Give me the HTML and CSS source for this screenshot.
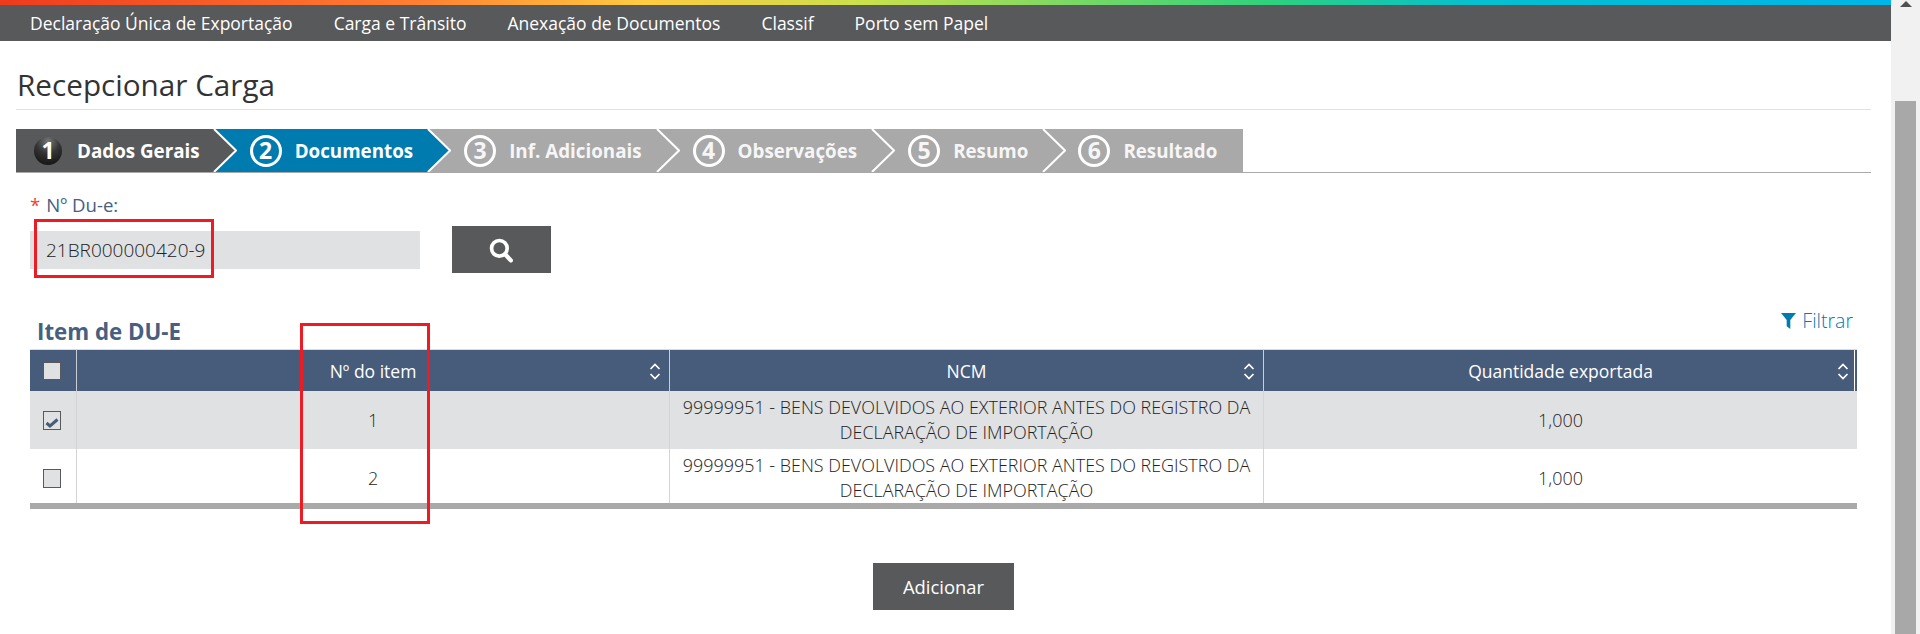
FILE: index.html
```html
<!DOCTYPE html>
<html lang="pt-BR">
<head>
<meta charset="utf-8">
<title>Recepcionar Carga</title>
<link rel="stylesheet" href="styles.css">
</head>
<body>
<div class="app">
  <div class="page">
    <div class="rainbow"></div>
    <nav class="nav">
      <a>Declaração Única de Exportação</a>
      <a>Carga e Trânsito</a>
      <a>Anexação de Documentos</a>
      <a>Classif</a>
      <a>Porto sem Papel</a>
    </nav>
    <main class="content">
      <h1 class="title">Recepcionar Carga</h1>
      <ol class="steps">
        <li class="step done"><span class="num">1</span><span>Dados Gerais</span>
          <svg class="chev" viewBox="0 0 24 43"><path class="tip" d="M0 0L23 21.5L0 43Z"/><path class="line" d="M1 0L23 21.5L1 43"/></svg></li>
        <li class="step active"><span class="num">2</span><span>Documentos</span>
          <svg class="chev" viewBox="0 0 24 43"><path class="tip" d="M0 0L23 21.5L0 43Z"/><path class="line" d="M1 0L23 21.5L1 43"/></svg></li>
        <li class="step"><span class="num">3</span><span>Inf. Adicionais</span>
          <svg class="chev" viewBox="0 0 24 43"><path class="tip" d="M0 0L23 21.5L0 43Z"/><path class="line" d="M1 0L23 21.5L1 43"/></svg></li>
        <li class="step"><span class="num">4</span><span>Observações</span>
          <svg class="chev" viewBox="0 0 24 43"><path class="tip" d="M0 0L23 21.5L0 43Z"/><path class="line" d="M1 0L23 21.5L1 43"/></svg></li>
        <li class="step"><span class="num">5</span><span>Resumo</span>
          <svg class="chev" viewBox="0 0 24 43"><path class="tip" d="M0 0L23 21.5L0 43Z"/><path class="line" d="M1 0L23 21.5L1 43"/></svg></li>
        <li class="step step-end"><span class="num">6</span><span>Resultado</span></li>
      </ol>
      <section class="form">
        <label class="field-label"><span class="req">*</span><span class="label-text">Nº Du-e:</span></label>
        <div class="field-row">
          <div class="input">21BR000000420-9</div>
          <button class="btn btn-search" type="button" aria-label="Pesquisar">
            <svg class="search-icon" viewBox="0 0 22 23"><circle cx="9.5" cy="9.5" r="7.2"/><path d="M14.8 15L20 20.6"/></svg>
          </button>
        </div>
        <div class="table-head">
          <h2 class="subtitle">Item de DU-E</h2>
          <a class="filter"><svg class="filter-icon" viewBox="0 0 14 15"><path d="M0 0H14L8.7 6.6V15L5.3 12.4V6.6Z"/></svg>Filtrar</a>
        </div>
        <table class="grid">
          <colgroup><col class="c-check"><col class="c-a"><col class="c-b"><col class="c-c"></colgroup>
          <thead>
            <tr>
              <th><span class="box"></span></th>
              <th>Nº do item<svg class="sort" viewBox="0 0 12 17"><path d="M1.5 6L6 1.5L10.500 6M1.500 11L6 15.500L10.500 11"/></svg></th>
              <th>NCM<svg class="sort" viewBox="0 0 12 17"><path d="M1.5 6L6 1.5L10.500 6M1.500 11L6 15.500L10.500 11"/></svg></th>
              <th>Quantidade exportada<svg class="sort" viewBox="0 0 12 17"><path d="M1.5 6L6 1.5L10.500 6M1.500 11L6 15.500L10.500 11"/></svg></th>
            </tr>
          </thead>
          <tbody>
            <tr class="sel">
              <td><span class="box box-dark"><svg class="check" viewBox="0 0 14 10"><path d="M1.500 5L5 8L12.500 1.500"/></svg></span></td>
              <td>1</td>
              <td>99999951 - BENS DEVOLVIDOS AO EXTERIOR ANTES DO REGISTRO DA DECLARAÇÃO DE IMPORTAÇÃO</td>
              <td>1,000</td>
            </tr>
            <tr class="last">
              <td><span class="box box-dark"></span></td>
              <td>2</td>
              <td>99999951 - BENS DEVOLVIDOS AO EXTERIOR ANTES DO REGISTRO DA DECLARAÇÃO DE IMPORTAÇÃO</td>
              <td>1,000</td>
            </tr>
          </tbody>
        </table>
        <div class="actions"><button class="btn btn-add" type="button">Adicionar</button></div>
      </section>
    </main>
    <div class="mark mark-input"></div>
    <div class="mark mark-col"></div>
  </div>
  <aside class="scrollbar">
    <span class="arrow"></span>
    <span class="thumb"></span>
  </aside>
</div>
</body>
</html>
```
FILE: styles.css
```css
* { box-sizing: border-box; }
html, body { margin: 0; height: 634px; overflow: hidden; background: #fff; }
body { font-family: "Open Sans", "Liberation Sans", sans-serif; color: #333; }

.app { display: flex; height: 634px; }
.page { position: relative; flex: 1; min-width: 0; }

.rainbow {
  height: 5px;
  background: linear-gradient(90deg, #ef3a1d 0%, #ff7f32 22%, #ffcb42 34%, #c8e04c 46%, #2fd17c 67%, #06bfcf 78%, #00b5e8 100%);
}
.nav {
  height: 36px;
  background: #58595b;
  display: flex;
  align-items: center;
  gap: 41px;
  padding: 0 0 0 30px;
  color: #fff;
  font-size: 17.500px;
}

.content { padding: 0 20px 0 16px; }
.title {
  margin: 0 0 19px;
  height: 69px;
  padding: 27px 0 0 1px;
  border-bottom: 1px solid #e1e1e1;
  font-size: 29.700px;
  font-weight: 400;
  line-height: 34px;
  color: #333;
}

.steps {
  display: flex;
  margin: 0;
  padding: 0;
  height: 44px;
  list-style: none;
  border-bottom: 1px solid #a9a9a9;
}
.step {
  position: relative;
  display: flex;
  align-items: center;
  height: 43px;
  padding: 0 14px 0 37px;
  gap: 13px;
  background: #a9a9a9;
  color: #f6f6f6;
  font-size: 18.800px;
  font-weight: 700;
  --c: #a9a9a9;
}
.step.done { background: #58595b; color: #fff; padding: 0 13px 0 18px; gap: 15px; --c: #58595b; }
.step.active { background: #007bb0; color: #fff; --c: #007bb0; }
.step.step-end { padding-right: 26px; padding-left: 36px; }
.num {
  flex: none;
  width: 32px;
  height: 32px;
  border: 3px solid #fff;
  border-radius: 50%;
  display: flex;
  align-items: center;
  justify-content: center;
  font-size: 23px;
  line-height: 1;
}
.done .num { width: 28px; height: 28px; border: 0; background: radial-gradient(circle at 50% 15%, #777 0%, #333 45%, #0c0c0c 100%); }
.chev {
  position: absolute;
  left: 100%;
  top: 0;
  width: 24px;
  height: 43px;
  z-index: 1;
}
.tip { fill: var(--c); }
.line { fill: none; stroke: #fff; stroke-width: 2; }

.form { padding: 22px 14px 0 14px; }
.field-label { display: flex; gap: 6px; font-size: 18.600px; font-weight: 400; line-height: 20px; color: #47607f; }
.req { color: #ef4136; }
.field-row { display: flex; align-items: center; gap: 32px; margin-top: 11px; }
.input {
  width: 390px;
  height: 38px;
  background: #e0e1e3;
  padding-left: 16px;
  font-size: 19px;
  font-weight: 300;
  line-height: 38px;
  color: #222;
}
.btn { border: 0; background: #58595b; color: #fff; font: inherit; display: flex; align-items: center; justify-content: center; padding: 0; }
.btn-search { width: 99px; height: 47px; padding: 2px 2px 0 0; }
.search-icon { width: 24px; height: 25px; fill: none; stroke: #fff; stroke-width: 3.4; }
.search-icon path { stroke-width: 4; stroke-linecap: round; }

.table-head { display: flex; justify-content: space-between; align-items: flex-end; height: 38px; padding: 0 4px 0 7px; margin-top: 38px; }
.subtitle { margin: 0 0 2px; font-size: 22.300px; font-weight: 700; line-height: 30px; color: #47607f; }
.filter { align-self: flex-start; display: flex; align-items: center; gap: 6px; font-size: 19.500px; font-weight: 300; line-height: 20px; color: #007bb0; }
.filter-icon { width: 15px; height: 16px; fill: #007bb0; }

.grid { width: 1827px; table-layout: fixed; border-collapse: separate; border-spacing: 0; border-bottom: 6px solid #a9a9a9; }
.c-check { width: 47px; }
.c-a { width: 593px; }
.c-b { width: 594px; }
.c-c { width: 593px; }
.grid th {
  position: relative;
  height: 42px;
  padding: 0;
  background: #475c7a;
  color: #fff;
  font-size: 17.500px;
  font-weight: 400;
  border-top: 1px solid #d9dde3;
  border-right: 1px solid #c9ced6;
}
.grid th:last-child { border-right: 0; box-shadow: inset -2px 0 0 #475c7a, inset -3px 0 0 #fff; }
.grid td {
  padding: 4px 8px;
  text-align: center;
  font-size: 17.950px;
  font-weight: 300;
  line-height: 25px;
  color: #222;
  border-right: 1px solid #d3d4d6;
}
.grid td:last-child { border-right: 0; }
.grid td:first-child { padding: 0 0 0 13px; text-align: left; }
.sel td { height: 58px; background: #e0e1e3; }
.last td { height: 53px; padding-bottom: 0; }
.grid .last td:first-child { padding-top: 4px; }
.sort { position: absolute; right: 8px; top: 13px; width: 12px; height: 17px; fill: none; stroke: #fff; stroke-width: 1.7; }

.box { display: block; width: 18px; height: 18px; background: #e0e1e3; border: 1px solid #58595b; position: relative; }
.grid th .box { margin-left: 13px; border-color: #58595b; }
.box-dark { height: 19px; }
.check { position: absolute; left: 1px; top: 6px; width: 14px; height: 10px; fill: none; stroke: #475c7a; stroke-width: 3; }

.actions { display: flex; justify-content: center; margin-top: 54px; }
.btn-add { width: 141px; height: 47px; font-size: 18.400px; }

.mark { position: absolute; border: 3px solid #ed1c24; pointer-events: none; }
.mark-input { left: 34px; top: 219px; width: 180px; height: 59px; }
.mark-col { left: 300px; top: 323px; width: 130px; height: 201px; }

.scrollbar { width: 29px; background: #f1f1f1; display: flex; flex-direction: column; align-items: center; padding-right: 0; }
.arrow { width: 0; height: 0; margin: 1px 0 0 0; border-left: 6px solid transparent; border-right: 6px solid transparent; border-bottom: 6px solid #505050; }
.thumb { width: 21px; height: 533px; margin-top: 94px; margin-right: 1px; background: #a8a8a8; }
```
